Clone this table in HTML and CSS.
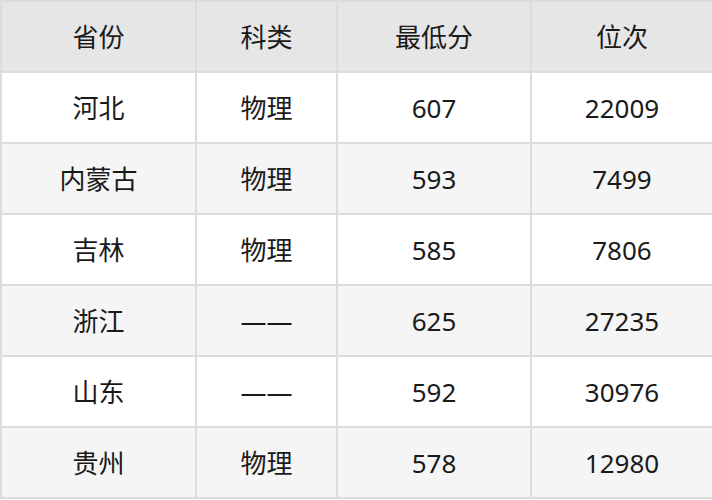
FILE: index.html
```html
<!DOCTYPE html>
<html lang="zh">
<head>
<meta charset="utf-8">
<link rel="stylesheet" href="styles.css">
</head>
<body>
<table class="score-table">
  <colgroup>
    <col class="c1"><col class="c2"><col class="c3"><col class="c4">
  </colgroup>
  <thead>
    <tr><th>省份</th><th>科类</th><th>最低分</th><th>位次</th></tr>
  </thead>
  <tbody>
    <tr><td>河北</td><td>物理</td><td>607</td><td>22009</td></tr>
    <tr><td>内蒙古</td><td>物理</td><td>593</td><td>7499</td></tr>
    <tr><td>吉林</td><td>物理</td><td>585</td><td>7806</td></tr>
    <tr><td>浙江</td><td>——</td><td>625</td><td>27235</td></tr>
    <tr><td>山东</td><td>——</td><td>592</td><td>30976</td></tr>
    <tr><td>贵州</td><td>物理</td><td>578</td><td>12980</td></tr>
  </tbody>
</table>
</body>
</html>
```
FILE: styles.css
```css
html, body {
  margin: 0;
  padding: 0;
  background: #ffffff;
}
.score-table {
  width: 712px;
  border-collapse: collapse;
  table-layout: fixed;
  font-family: "Noto Sans", "Noto Sans CJK SC", sans-serif;
  font-size: 26px;
  line-height: 36px;
  color: #1a1a1a;
}
.c1 { width: 195px; }
.c2 { width: 141px; }
.c3 { width: 194px; }
.c4 { width: 182px; }
.score-table th,
.score-table td {
  border: 2px solid #dcdcdc;
  text-align: center;
  vertical-align: middle;
  padding: 0;
  height: 69px;
  font-weight: normal;
}
.score-table thead th {
  background: #e6e6e6;
}
.score-table tbody tr:nth-child(even) td {
  background: #f5f5f5;
}
```
